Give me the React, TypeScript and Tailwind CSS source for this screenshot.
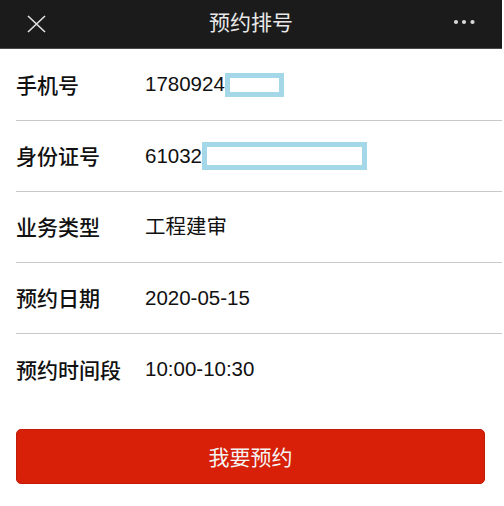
import React from 'react'

const rows = [
  { label: '手机号', value: '1780924', mask: 'w-[59px] h-[24px]' },
  { label: '身份证号', value: '61032', mask: 'w-[165px] h-[28px]' },
  { label: '业务类型', value: '工程建审' },
  { label: '预约日期', value: '2020-05-15' },
]

export default function App() {
  return (
    <div className="w-[504px] h-[506px] bg-white overflow-hidden font-['Liberation_Sans','Noto_Sans_CJK_SC',sans-serif]">
      <div className="w-[502px]">
        {/* top bar */}
        <div className="h-[49px] bg-[#1b1b1b] border-b border-[#4a4a4a] flex items-center justify-between pl-[27px] pr-[27px] relative">
          <svg width="19" height="18" viewBox="0 0 19 18" className="-mt-[1px]">
            <path d="M1 1 L18 17 M18 1 L1 17" stroke="#e2e2e2" strokeWidth="1.6" fill="none" />
          </svg>
          <div className="absolute left-0 right-0 text-center text-[21px] leading-none text-[#e8e8e8] font-['Noto_Sans_CJK_SC',sans-serif] -mt-[5px]">
            预约排号
          </div>
          <svg width="22" height="6" viewBox="0 0 22 6" className="-mt-[4px]">
            <circle cx="3" cy="3" r="2.1" fill="#d8d8d8" />
            <circle cx="11" cy="3" r="2.1" fill="#d8d8d8" />
            <circle cx="19.5" cy="3" r="2.1" fill="#d8d8d8" />
          </svg>
        </div>

        {/* form rows */}
        <div className="pl-[16px]">
          {rows.map((r, i) => (
            <div
              key={r.label}
              className={`${i === 0 ? 'h-[72px]' : 'h-[71px]'} border-b border-[#c9c9c9] flex items-center`}
            >
              <div className="w-[129px] text-[21px] font-medium text-[#111] font-['Noto_Sans_CJK_SC',sans-serif]">
                {r.label}
              </div>
              <div className="flex items-center text-[20.5px] text-[#111]">
                <span className="font-['Liberation_Sans','Noto_Sans_CJK_SC',sans-serif]">{r.value}</span>
                {r.mask && <span className={`${r.mask} border-[5px] border-[#a4d7e7] bg-white`} />}
              </div>
            </div>
          ))}
          <div className="h-[71px] flex items-center">
            <div className="w-[129px] text-[21px] font-medium text-[#111] font-['Noto_Sans_CJK_SC',sans-serif]">
              预约时间段
            </div>
            <div className="text-[20.5px] text-[#111]">10:00-10:30</div>
          </div>
        </div>

        {/* submit */}
        <div className="px-[16px] pt-[24px] pr-[17px]">
          <button className="w-full h-[55px] rounded-[5px] bg-[#d81f07] border border-[#c21a06] text-[#f4f4f4] text-[21px] font-['Noto_Sans_CJK_SC',sans-serif] flex items-center justify-center">
            我要预约
          </button>
        </div>
      </div>
    </div>
  )
}
